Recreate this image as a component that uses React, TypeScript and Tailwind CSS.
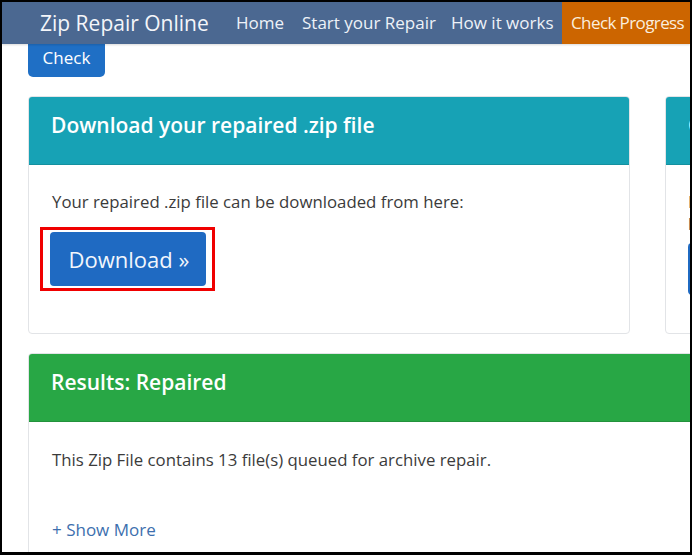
import React from "react";

export default function App() {
  const font = { fontFamily: '"Open Sans", "Noto Sans", sans-serif' };
  return (
    <div className="w-[692px] h-[555px] bg-black overflow-hidden" style={font}>
      <div className="ml-[2px] mt-[2px] w-[688px] h-[550px] bg-white overflow-hidden flex flex-col">
        {/* navbar */}
        <div className="h-[42px] shrink-0 bg-[#4b6891] flex items-center text-white shadow-[0_1px_2px_rgba(0,0,0,0.15)] relative z-10">
          <div className="pl-[38px] text-[21px] leading-none w-[234px] shrink-0 whitespace-nowrap text-[#f4f6fa]">Zip Repair Online</div>
          <div className="flex h-full items-center text-[17px] text-[#eef2f8] shrink-0">
            <span className="w-[66px] shrink-0">Home</span>
            <span className="w-[149px] shrink-0 whitespace-nowrap">Start your Repair</span>
            <span className="w-[111px] shrink-0 whitespace-nowrap">How it works</span>
            <span className="h-full flex items-center bg-[#cc6500] pl-[9px] pr-[10px] whitespace-nowrap text-[#fbeede] shrink-0 tracking-[-0.6px]">Check Progress</span>
          </div>
        </div>
        <div className="pl-[26px] flex flex-col">
          <div className="w-[77px] h-[34px] bg-[#1f6fc5] rounded-b-[5px] text-white text-[17px] flex items-center justify-center -mt-[1px] pb-[4px]">Check</div>
          <div className="flex gap-[35px] mt-[19px] w-[1000px]">
            {/* card 1 */}
            <div className="w-[602px] h-[238px] border border-[#e2e4e7] rounded-[4px] overflow-hidden flex flex-col shrink-0">
              <div className="h-[68px] bg-[#17a2b5] border-b border-[#14909f] pt-[15px] pl-[22px] text-white text-[21px] leading-[26px] font-semibold">
                Download your repaired .zip file
              </div>
              <div className="pl-[23px] pt-[26px] flex flex-col">
                <div className="text-[16.8px] text-[#3b3b3b] leading-[22px]">Your repaired .zip file can be downloaded from here:</div>
                <div className="mt-[14px] -ml-[12px] w-[175px] h-[64px] border-[3px] border-[#f00000] flex items-center justify-center">
                  <div className="w-[156px] h-[54px] bg-[#1f6ac2] rounded-[4px] text-[#f2f6fc] text-[22px] flex items-center justify-center pl-[3px]">
                    Download »
                  </div>
                </div>
              </div>
            </div>
            {/* card 2 partial */}
            <div className="w-[300px] h-[238px] border border-[#e2e4e7] rounded-[4px] overflow-hidden flex flex-col shrink-0">
              <div className="h-[68px] bg-[#17a2b5] border-b border-[#14909f] pt-[15px] pl-[22px] text-white text-[21px] leading-[26px] font-semibold">
                Check
              </div>
              <div className="pl-[22px] pt-[26px] flex flex-col">
                <div className="text-[16.8px] text-[#3b3b3b] leading-[22px]">Enter</div>
                <div className="text-[16.8px] text-[#3b3b3b] leading-[22px]">below</div>
                <div className="mt-[8px] w-[120px] h-[52px] bg-[#1f6ac2] rounded-[4px]" />
              </div>
            </div>
          </div>
          {/* card 3 */}
          <div className="mt-[19px] w-[700px] h-[300px] border border-[#e2e4e7] rounded-[4px] overflow-hidden flex flex-col">
            <div className="h-[68px] bg-[#28a745] border-b border-[#23923c] pt-[15px] pl-[22px] text-white text-[21px] leading-[26px] font-semibold">
              Results: Repaired
            </div>
            <div className="pl-[23px] pt-[27px] flex flex-col">
              <div className="text-[16.8px] text-[#3b3b3b] leading-[22px]">This Zip File contains 13 file(s) queued for archive repair.</div>
              <div className="mt-[48px] text-[17px] text-[#3d6fae] leading-[22px]">+ Show More</div>
            </div>
          </div>
        </div>
      </div>
    </div>
  );
}
